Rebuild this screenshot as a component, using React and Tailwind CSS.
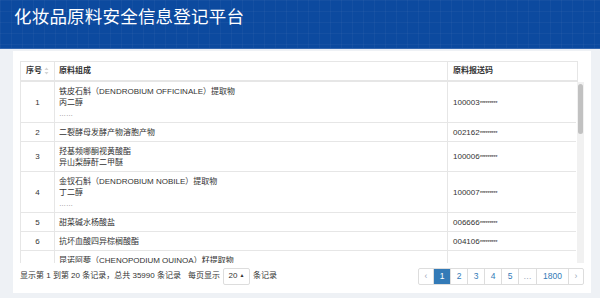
import React from "react";

// ── Table data ────────────────────────────────────────────────────────────────
const rows = [
  { no: 1, lines: ["铁皮石斛（DENDROBIUM OFFICINALE）提取物", "丙二醇"], more: true, code: "100003" },
  { no: 2, lines: ["二裂酵母发酵产物溶胞产物"], code: "002162" },
  { no: 3, lines: ["羟基频哪酮视黄酸酯", "异山梨醇酐二甲醚"], code: "100006" },
  { no: 4, lines: ["金钗石斛（DENDROBIUM NOBILE）提取物", "丁二醇"], more: true, code: "100007" },
  { no: 5, lines: ["甜菜碱水杨酸盐"], code: "006666" },
  { no: 6, lines: ["抗坏血酸四异棕榈酸酯"], code: "004106" },
  { no: 7, lines: ["昆诺阿藜（CHENOPODIUM QUINOA）籽提取物"], more: true, code: "" },
];

const pages = [
  { label: "‹", w: "w-[16px]", muted: true },
  { label: "1", w: "w-[18px]", active: true },
  { label: "2", w: "w-[18px]" },
  { label: "3", w: "w-[18px]" },
  { label: "4", w: "w-[18px]" },
  { label: "5", w: "w-[18px]" },
  { label: "…", w: "w-[19px]", muted: true },
  { label: "1800", w: "w-[33px]" },
  { label: "›", w: "w-[16px]", muted: true },
];

function SortIcon() {
  return (
    <svg width="5" height="8" viewBox="0 0 5 8" className="ml-auto">
      <path d="M2.5 0.5 L4.5 3 L0.5 3 Z" fill="#d4d4d4" />
      <path d="M2.5 7.5 L4.5 5 L0.5 5 Z" fill="#d4d4d4" />
    </svg>
  );
}

export default function App() {
  return (
    <div
      className="w-[600px] h-[298px] overflow-hidden bg-[#eef1f5] text-[#333]"
      style={{ fontFamily: '"Liberation Sans", "Noto Sans CJK SC", sans-serif' }}
    >
      {/* ── Header ── */}
      <div className="h-[49px] bg-[#0c4a9f] border-b border-[#3568b0] bg-[linear-gradient(rgba(255,255,255,0.035)_1px,transparent_1px),linear-gradient(90deg,rgba(255,255,255,0.035)_1px,transparent_1px)] bg-[size:11px_11px] flex items-start pt-[5px] pl-[14px]">
        <h1 className="text-white text-[17.5px] leading-[24px] tracking-[0.2px] font-normal">
          化妆品原料安全信息登记平台
        </h1>
      </div>

      {/* ── Card ── */}
      <div className="mt-[2px] ml-[13px] w-[578px] h-[242px] bg-white pt-[10px] px-[7px]">
        {/* Table head */}
        <table className="w-[557px] table-fixed border-collapse text-[8px]">
          <colgroup>
            <col className="w-[34px]" />
            <col className="w-[393px]" />
            <col className="w-[130px]" />
          </colgroup>
          <thead>
            <tr className="h-[19px]">
              <th className="border border-[#e6e6e6] border-b-2 px-[5px] font-bold text-left">
                <div className="flex items-center">
                  <span>序号</span>
                  <SortIcon />
                </div>
              </th>
              <th className="border border-[#e6e6e6] border-b-2 px-[4px] font-bold text-left">原料组成</th>
              <th className="border border-[#e6e6e6] border-b-2 px-[5px] font-bold text-left">原料报送码</th>
            </tr>
          </thead>
        </table>

        {/* Table body + scrollbar */}
        <div className="flex h-[181px] overflow-hidden">
          <div className="w-[557px] h-[181px] overflow-hidden">
            <table className="w-[557px] table-fixed border-collapse text-[8px] leading-[11px]">
              <colgroup>
                <col className="w-[34px]" />
                <col className="w-[393px]" />
                <col className="w-[130px]" />
              </colgroup>
              <tbody>
                {rows.map((r) => (
                  <tr key={r.no}>
                    <td className="border border-t-0 border-[#e6e6e6] pt-[4px] pb-[3px] text-center align-middle">
                      <div className="h-[11px]">{r.no}</div>
                    </td>
                    <td className="border border-t-0 border-[#e6e6e6] pt-[4px] pb-[3px] px-[4px]">
                      {r.lines.map((l) => (
                        <div key={l} className="h-[11px] whitespace-nowrap">{l}</div>
                      ))}
                      {r.more && <div className="h-[11px] text-[#777] text-[7px]">……</div>}
                    </td>
                    <td className="border border-t-0 border-[#e6e6e6] pt-[4px] pb-[3px] px-[5px] align-middle">
                      <div className="h-[11px]">
                        {r.code}
                        {r.code && <span className="text-[6px] tracking-[-0.4px]">*********</span>}
                      </div>
                    </td>
                  </tr>
                ))}
              </tbody>
            </table>
          </div>
          <div className="w-[7px] ml-px bg-[#f1f1f1] pt-[2px] px-px">
            <div className="h-[50px] rounded-[3px] bg-[#c1c1c1]" />
          </div>
        </div>

        {/* ── Footer ── */}
        <div className="mt-[5px] flex items-center justify-between text-[8px]">
          <div className="flex items-center">
            <span>显示第 1 到第 20 条记录，总共 35990 条记录</span>
            <span className="ml-[7px]">每页显示</span>
            <div className="ml-[3px] w-[27px] h-[17px] border border-[#ddd] rounded-[2px] flex items-center justify-center gap-[2px]">
              <span>20</span>
              <span className="text-[5px]">▲</span>
            </div>
            <span className="ml-[3px]">条记录</span>
          </div>
          <div className="flex h-[17px]">
            {pages.map((p, i) => (
              <div
                key={p.label}
                className={[
                  p.w,
                  "h-full flex items-center justify-center border border-[#ddd] text-[8.5px]",
                  i > 0 ? "-ml-px" : "rounded-l-[2px]",
                  i === pages.length - 1 ? "rounded-r-[2px]" : "",
                  p.active
                    ? "bg-[#337ab7] border-[#337ab7] text-white relative"
                    : p.muted
                    ? "text-[#9aa7b8]"
                    : "text-[#337ab7]",
                ].join(" ")}
              >
                {p.label}
              </div>
            ))}
          </div>
        </div>
      </div>
    </div>
  );
}
